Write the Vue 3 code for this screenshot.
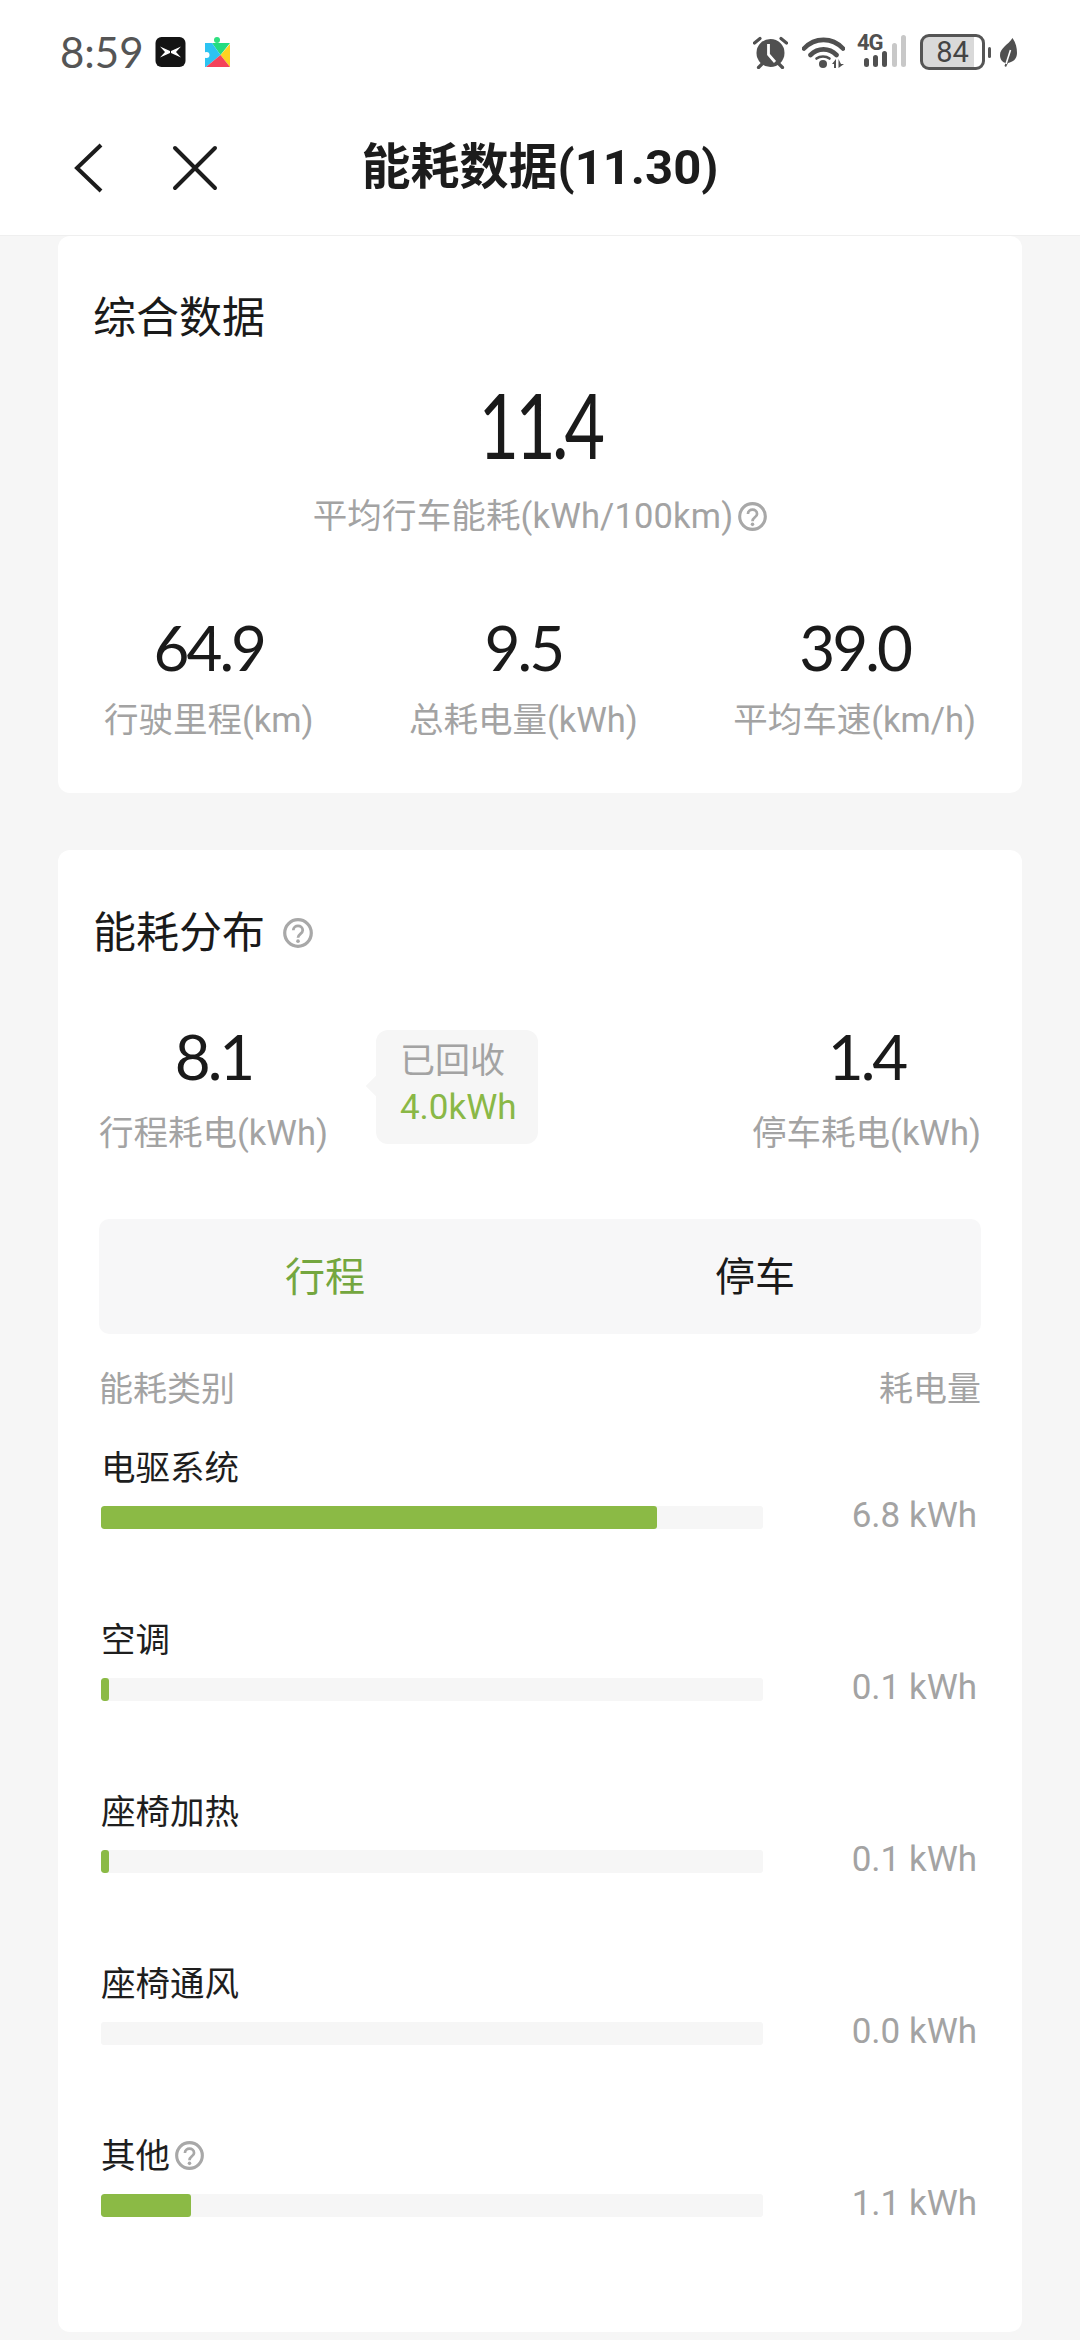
<template>
  <div class="page">
    <header class="top">
      <div class="status">
        <span class="time">8:59</span>
        <svg class="app-x" viewBox="0 0 30 30">
          <rect width="30" height="30" rx="6" fill="#141414" />
          <path d="M4.5 9.5L14.5 14V16L4.5 20.5L9.5 15Z" fill="#fff" />
          <path d="M25.5 9.5L15.5 14V16L25.5 20.5L20.5 15Z" fill="#fff" />
        </svg>
        <svg class="app-play" viewBox="0 0 25 30">
          <circle cx="12" cy="3" r="3" fill="#2ee07f" />
          <path d="M7 6H25L15.5 18Z" fill="#22dc80" />
          <path d="M0 6H7L15.5 18L1 30H0Z" fill="#2cc3f2" />
          <path d="M15.5 18L25 7V30Z" fill="#fdd222" />
          <path d="M1 30L15.5 18L25 30Z" fill="#f4425a" />
          <circle cx="1.5" cy="18" r="3" fill="#fff" />
        </svg>
        <div class="status-right">
          <svg class="ic-alarm" viewBox="0 0 35 33">
            <circle cx="17.5" cy="17" r="14" fill="#505050" />
            <path d="M15.5 8V18.5L22 26" fill="none" stroke="#fff" stroke-width="2.8" />
            <path d="M1.5 7L7 2.5M33.5 7L28 2.5M5.5 31.5L9 28M29.5 31.5L26 28" stroke="#505050" stroke-width="3.2" stroke-linecap="round" />
          </svg>
          <svg class="ic-wifi" viewBox="0 0 43 31">
            <path d="M2 11.5C13 0 30 0 41 11.5M8.5 18C16 10.5 27 10.5 34.5 18" fill="none" stroke="#505050" stroke-width="4.6" stroke-linecap="round" />
            <path d="M14.5 21.5C18 18.8 24 18.8 27.5 21.5" fill="none" stroke="#505050" stroke-width="2.6" stroke-linecap="round" />
            <circle cx="21" cy="27" r="4" fill="#505050" />
            <path d="M30 27L34 22V31H32V27ZM36.5 22V31L42 27H39Z" fill="#505050" />
          </svg>
          <div class="signal">
            <span class="four-g">4G</span>
            <svg class="bars" viewBox="0 0 50 36">
              <rect x="7" y="24" width="5" height="9" rx="2.5" fill="#505050" />
              <rect x="16" y="21" width="5" height="12" rx="2.5" fill="#505050" />
              <rect x="25" y="17" width="5" height="16" rx="2.5" fill="#505050" />
              <rect x="35" y="9" width="5" height="24" rx="2.5" fill="#c8c8c8" />
              <rect x="44" y="1" width="5" height="32" rx="2.5" fill="#c8c8c8" />
            </svg>
          </div>
          <div class="battery-wrap">
            <div class="battery">84</div>
            <span class="nub"></span>
          </div>
          <svg class="ic-leaf" viewBox="0 0 17 29">
            <path d="M12.5 0C16 5 17 10 17 15C17 21 13 24 8 25L6 29L4.5 28L5.5 25C2 24 0 21 0 17C0 10 8 7 12.5 0Z" fill="#505050" />
            <path d="M6 26L10.5 12" fill="none" stroke="#fff" stroke-width="1.6" />
          </svg>
        </div>
      </div>
      <nav class="nav">
        <svg class="ic-back" viewBox="0 0 30 50">
          <path d="M28 2L4 25L28 48" fill="none" stroke="#1c1c1c" stroke-width="4" />
        </svg>
        <svg class="ic-close" viewBox="0 0 46 46">
          <path d="M3 3L43 43M43 3L3 43" fill="none" stroke="#1c1c1c" stroke-width="4" stroke-linecap="round" />
        </svg>
        <h1>能耗数据(11.30)</h1>
      </nav>
    </header>

    <section class="card card-first">
      <h2>综合数据</h2>
      <div class="big num"><span>11.4</span></div>
      <div class="big-label">
        <span>平均行车能耗(kWh/100km)</span>
        <svg class="help" viewBox="0 0 28 28">
          <circle cx="14" cy="14" r="12.4" fill="none" stroke="#a8a8a8" stroke-width="3" />
          <path d="M9.6 11.5C9.6 6 18.4 6 18.4 11.5C18.4 14.8 14 14.8 14 18.5" fill="none" stroke="#a8a8a8" stroke-width="2.6" />
          <circle cx="14" cy="21.6" r="1.7" fill="#a8a8a8" />
        </svg>
      </div>
      <div class="stats">
        <div v-for="s in stats" :key="s.label" class="stat">
          <div class="mid num">{{ s.value }}</div>
          <div class="grey">{{ s.label }}</div>
        </div>
      </div>
    </section>

    <section class="card card-second">
      <h2 class="with-help">
        能耗分布
        <svg class="help help-title" viewBox="0 0 28 28">
          <circle cx="14" cy="14" r="12.4" fill="none" stroke="#a8a8a8" stroke-width="3" />
          <path d="M9.6 11.5C9.6 6 18.4 6 18.4 11.5C18.4 14.8 14 14.8 14 18.5" fill="none" stroke="#a8a8a8" stroke-width="2.6" />
          <circle cx="14" cy="21.6" r="1.7" fill="#a8a8a8" />
        </svg>
      </h2>
      <div class="summary">
        <div class="stat">
          <div class="mid num">8.1</div>
          <div class="grey">行程耗电(kWh)</div>
        </div>
        <div class="tip">
          <div class="tip-title">已回收</div>
          <div class="tip-value">4.0kWh</div>
        </div>
        <div class="stat stat-end">
          <div class="mid num">1.4</div>
          <div class="grey">停车耗电(kWh)</div>
        </div>
      </div>
      <div class="tabs">
        <span class="tab active">行程</span>
        <span class="tab">停车</span>
      </div>
      <div class="table-head grey">
        <span>能耗类别</span>
        <span>耗电量</span>
      </div>
      <div class="rows">
        <div v-for="r in rows" :key="r.name" class="row">
          <div class="row-name">
            <span>{{ r.name }}</span>
            <svg v-if="r.help" class="help" viewBox="0 0 28 28">
              <circle cx="14" cy="14" r="12.4" fill="none" stroke="#a8a8a8" stroke-width="3" />
              <path d="M9.6 11.5C9.6 6 18.4 6 18.4 11.5C18.4 14.8 14 14.8 14 18.5" fill="none" stroke="#a8a8a8" stroke-width="2.6" />
              <circle cx="14" cy="21.6" r="1.7" fill="#a8a8a8" />
            </svg>
          </div>
          <div class="track">
            <div class="fill" :style="{ width: r.width + 'px' }"></div>
          </div>
          <div class="row-value">{{ r.value }}</div>
        </div>
      </div>
    </section>
  </div>
</template>

<script setup>
const stats = [
  { value: '64.9', label: '行驶里程(km)' },
  { value: '9.5', label: '总耗电量(kWh)' },
  { value: '39.0', label: '平均车速(km/h)' }
]

const rows = [
  { name: '电驱系统', value: '6.8 kWh', width: 556 },
  { name: '空调', value: '0.1 kWh', width: 8 },
  { name: '座椅加热', value: '0.1 kWh', width: 8 },
  { name: '座椅通风', value: '0.0 kWh', width: 0 },
  { name: '其他', value: '1.1 kWh', width: 90, help: true }
]
</script>

<style>
html,
body {
  margin: 0;
  background: #f6f6f6;
}
</style>

<style scoped>
.page {
  width: 1080px;
  height: 2340px;
  overflow: hidden;
  background: #f6f6f6;
  color: #1a1a1a;
  font-family: Roboto, "Noto Sans CJK SC", sans-serif;
}

.top {
  background: #fff;
  border-bottom: 1px solid #efefef;
  box-sizing: border-box;
  height: 236px;
}

.status {
  display: flex;
  align-items: center;
  height: 100px;
  padding: 4px 63px 0 60px;
  box-sizing: border-box;
}

.time {
  font-family: Lato, sans-serif;
  font-size: 42px;
  color: #555;
  width: 82px;
  margin-right: 13px;
  white-space: nowrap;
}

.app-x {
  width: 31px;
  height: 30px;
  margin-right: 19px;
}

.app-play {
  width: 25px;
  height: 30px;
}

.status-right {
  margin-left: auto;
  display: flex;
  align-items: center;
}

.ic-alarm {
  width: 35px;
  height: 33px;
  margin-right: 14px;
}

.ic-wifi {
  width: 43px;
  height: 31px;
  margin-right: 12px;
}

.signal {
  position: relative;
  width: 50px;
  height: 36px;
  margin-right: 13px;
}

.bars {
  width: 50px;
  height: 36px;
  display: block;
}

.four-g {
  position: absolute;
  left: 0;
  top: -1px;
  font-size: 22px;
  line-height: 20px;
  font-weight: 700;
  letter-spacing: -1px;
  color: #505050;
}

.battery-wrap {
  display: flex;
  align-items: center;
  gap: 3px;
  margin-right: 9px;
}

.battery {
  width: 65px;
  height: 36px;
  box-sizing: border-box;
  border: 3px solid #555;
  border-radius: 9px;
  background: linear-gradient(90deg, #d9d9d9 86%, #fff 86%);
  color: #444;
  font-size: 29px;
  line-height: 30px;
  text-align: center;
}

.nub {
  width: 3px;
  height: 11px;
  border-radius: 2px;
  background: #555;
}

.ic-leaf {
  width: 17px;
  height: 29px;
}

.nav {
  position: relative;
  height: 135px;
  display: flex;
  align-items: center;
}

.ic-back {
  width: 30px;
  height: 50px;
  margin-left: 73px;
}

.ic-close {
  width: 46px;
  height: 46px;
  margin-left: 69px;
}

h1 {
  position: absolute;
  left: 0;
  right: 0;
  top: 40px;
  margin: 0;
  font-size: 49px;
  line-height: 56px;
  font-weight: 700;
  text-align: center;
  color: #1c1c1c;
}

.card {
  margin: 0 58px;
  padding: 0 35px;
  background: #fff;
  border-radius: 12px;
}

.card-first {
  height: 557px;
  box-sizing: border-box;
  padding-top: 57px;
  margin-bottom: 57px;
}

.card-second {
  height: 1482px;
  box-sizing: border-box;
  padding-top: 58px;
}

h2 {
  margin: 0;
  font-size: 43px;
  line-height: 50px;
  font-weight: 400;
}

.with-help {
  display: flex;
  align-items: center;
}

.num {
  font-family: Lato, sans-serif;
  font-weight: 400;
  color: #1a1a1a;
}

.big {
  margin-top: 31px;
  font-size: 92px;
  line-height: 100px;
  letter-spacing: -5px;
  text-align: center;
}

.big span {
  display: inline-block;
  transform: scaleX(0.76);
}

.big-label {
  margin-top: 20px;
  display: flex;
  justify-content: center;
  align-items: center;
  gap: 5px;
  font-size: 34.5px;
  line-height: 44px;
  letter-spacing: 0.15px;
  color: #a3a3a3;
}

.help {
  width: 29px;
  height: 29px;
  flex: none;
}

.help-title {
  width: 30px;
  height: 30px;
  margin-left: 18px;
}

.stats {
  margin: 74px 11px 0;
  display: flex;
  justify-content: space-between;
}

.stat {
  text-align: center;
}

.mid {
  font-size: 62px;
  line-height: 70px;
  letter-spacing: -3px;
}

.grey {
  font-size: 34.5px;
  line-height: 44px;
  color: #a3a3a3;
  white-space: nowrap;
}

.stat .grey {
  margin-top: 16px;
}

.summary {
  margin: 63px 6px 0;
  display: flex;
  align-items: flex-start;
}

.summary .stat .grey {
  margin-top: 20px;
}

.tip {
  position: relative;
  margin: 9px 0 0 48px;
  width: 162px;
  height: 114px;
  box-sizing: border-box;
  padding: 10px 0 0 24px;
  background: #f6f6f6;
  border-radius: 12px;
  font-size: 35px;
  line-height: 44px;
}

.tip::before {
  content: "";
  position: absolute;
  left: -7px;
  top: 48px;
  width: 16px;
  height: 16px;
  background: #f6f6f6;
  transform: rotate(45deg);
}

.tip-title {
  position: relative;
  color: #a3a3a3;
}

.tip-value {
  position: relative;
  margin-top: 2px;
  color: #8ab846;
}

.stat-end {
  margin-left: auto;
}

.tabs {
  margin: 64px 6px 0;
  height: 115px;
  box-sizing: border-box;
  padding: 0 11px 5px;
  display: grid;
  grid-template-columns: 1fr 1fr;
  align-items: center;
  justify-items: center;
  background: #f7f7f8;
  border-radius: 10px;
  font-size: 40px;
}

.tab.active {
  color: #74a63f;
}

.table-head {
  margin: 33px 6px 0;
  display: flex;
  justify-content: space-between;
  font-size: 34px;
}

.rows {
  margin: 33px 6px 0 8px;
  display: flex;
  flex-direction: column;
  gap: 77px;
}

.row {
  display: grid;
  grid-template-columns: 662px 1fr;
  grid-template-rows: 44px 44px;
  row-gap: 7px;
  align-items: center;
}

.row-name {
  grid-column: 1 / 3;
  display: flex;
  align-items: center;
  gap: 5px;
  margin-top: 3px;
  font-size: 34.5px;
  line-height: 44px;
  color: #1e1e1e;
}

.track {
  height: 23px;
  background: #f6f6f6;
  border-radius: 3px;
  overflow: hidden;
}

.fill {
  height: 100%;
  background: #8bba45;
  border-radius: 3px;
}

.row-value {
  margin-bottom: 2px;
  text-align: right;
  padding-right: 4px;
  font-size: 35px;
  line-height: 44px;
  color: #a3a3a3;
}
</style>
